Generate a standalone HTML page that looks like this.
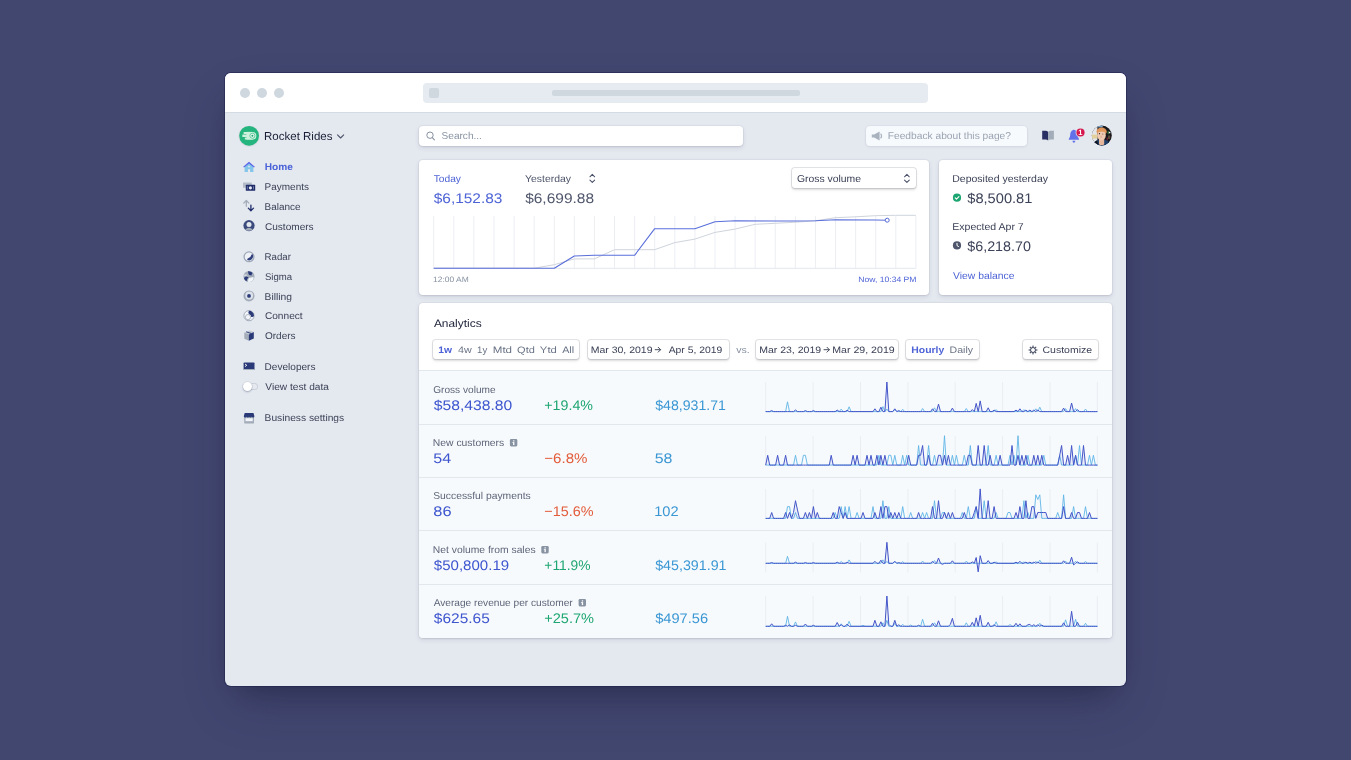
<!DOCTYPE html>
<html lang="en"><head><meta charset="utf-8"><title>Rocket Rides – Dashboard</title>
<style>
html,body{margin:0;padding:0}
body{width:1351px;height:760px;overflow:hidden;background:#424770;font-family:"Liberation Sans",sans-serif;position:relative;text-rendering:geometricPrecision}
#p{position:absolute;left:0;top:0;width:1351px;height:760px;overflow:hidden;will-change:transform}
#p div,#p .a{position:absolute;box-sizing:border-box}
.t{position:absolute;white-space:nowrap;line-height:20px;transform-origin:0 50%;display:block}
</style></head>
<body><div id="p">
<div style="left:225px;top:73px;width:901px;height:613px;border-radius:6px;background:#e4e8ef;box-shadow:0 0 0 1px rgba(28,30,72,.5),0 23px 46px -9px rgba(30,30,70,.32),0 14px 28px -14px rgba(0,0,0,.34);"></div>
<div style="left:225px;top:73px;width:901px;height:40px;border-radius:6px 6px 0 0;background:#fff;border-bottom:1px solid #d5dbe3;"></div>
<div style="left:240px;top:88px;width:10px;height:10px;border-radius:50%;background:#cfd7df;"></div>
<div style="left:256.7px;top:88px;width:10px;height:10px;border-radius:50%;background:#cfd7df;"></div>
<div style="left:273.5px;top:88px;width:10px;height:10px;border-radius:50%;background:#cfd7df;"></div>
<div style="left:423px;top:83px;width:505px;height:20px;border-radius:4px;background:#e6ebf1;"></div>
<div style="left:428.7px;top:88px;width:10px;height:10px;border-radius:2px;background:#cfd7df;"></div>
<div style="left:551.5px;top:90px;width:248.5px;height:6px;border-radius:2px;background:#cfd7df;"></div>
<svg class="a" style="left:236px;top:123px" width="27" height="27" viewBox="0 0 27 27"><circle cx="13.1" cy="13.3" r="10.6" fill="#3c4257" opacity=".07"/><circle cx="13.1" cy="12.8" r="9.9" fill="#24b47e"/>
<g fill="#cdf1dc"><rect x="7.6" y="8.9" width="9" height="2.2" rx=".5"/><rect x="6.3" y="11.6" width="9" height="2.3" rx=".5"/><rect x="8.8" y="14.4" width="8" height="2.2" rx=".5"/><rect x="10.5" y="8.9" width="6" height="7.7"/><circle cx="16.5" cy="12.75" r="3.85"/></g>
<circle cx="16.4" cy="12.75" r="2.5" fill="#eefbf3" stroke="#2fb984" stroke-width=".7"/><circle cx="16.4" cy="12.75" r="1" fill="#1fa56f"/></svg>
<span class="t" style="left:264px;top:127px;font-size:11.5px;color:#1a1f36;transform:translateX(0.05px);">Rocket Rides</span>
<svg class="a" style="left:336px;top:132px" width="11" height="10" viewBox="0 0 11 10"><path d="M1.5 2.8 L4.6 6 L7.7 2.8" fill="none" stroke="#4f566b" stroke-width="1.1" stroke-linecap="round" stroke-linejoin="round"/></svg>
<span class="t" style="left:264px;top:158px;font-size:9.8px;color:#4a62d8;font-weight:700;transform:translateX(0.72px) scaleX(1.0329);">Home</span>
<span class="t" style="left:264px;top:178px;font-size:9.8px;color:#3c4257;transform:translateX(0.58px) scaleX(1.0185);">Payments</span>
<span class="t" style="left:264px;top:198px;font-size:9.8px;color:#3c4257;transform:translateX(0.58px) scaleX(1.0182);">Balance</span>
<span class="t" style="left:264px;top:218px;font-size:9.8px;color:#3c4257;transform:translateX(0.89px) scaleX(1.0295);">Customers</span>
<span class="t" style="left:264px;top:248px;font-size:9.8px;color:#3c4257;transform:translateX(0.61px) scaleX(0.9873);">Radar</span>
<span class="t" style="left:264px;top:268px;font-size:9.8px;color:#3c4257;transform:translateX(0.97px) scaleX(0.9768);">Sigma</span>
<span class="t" style="left:264px;top:288px;font-size:9.8px;color:#3c4257;transform:translateX(0.55px) scaleX(1.0521);">Billing</span>
<span class="t" style="left:264px;top:307px;font-size:9.8px;color:#3c4257;transform:translateX(0.88px) scaleX(1.0353);">Connect</span>
<span class="t" style="left:264px;top:327px;font-size:9.8px;color:#3c4257;transform:translateX(0.93px) scaleX(1.0229);">Orders</span>
<span class="t" style="left:264px;top:358px;font-size:9.8px;color:#3c4257;transform:translateX(0.57px) scaleX(1.0266);">Developers</span>
<span class="t" style="left:265px;top:378px;font-size:9.8px;color:#3c4257;transform:translateX(0.36px) scaleX(1.0369);">View test data</span>
<span class="t" style="left:264px;top:409px;font-size:9.8px;color:#3c4257;transform:translateX(0.56px) scaleX(1.0439);">Business settings</span>
<svg class="a" style="left:242px;top:160px" width="15" height="15" viewBox="0 0 15 15"><g transform="translate(0.00 0.30)"><path d="M7 2.2 L11.4 6 V11.6 H8.1 V8.9 H5.9 V11.6 H2.6 V6 Z" fill="#84c5ea"/><circle cx="7" cy="6.3" r=".9" fill="#e3e8ee"/><path d="M7 1.5 L12.8 6.4 L12 7.3 L7 3.1 L2 7.3 L1.2 6.4 Z" fill="#5b62e6"/></g></svg>
<svg class="a" style="left:242px;top:179px" width="15" height="15" viewBox="0 0 15 15"><g transform="translate(0.00 0.80)"><rect x="1" y="2.6" width="8.8" height="5.4" rx=".6" fill="#b3bbc8"/><rect x="3.8" y="5" width="9.4" height="6" rx=".6" fill="#1f2d6b"/><circle cx="8.4" cy="8" r="1.6" fill="#e9edf3"/><path d="M5.3 6.4 V9.6 M11.5 6.4 V9.6" stroke="#8f9ac0" stroke-width=".7"/></g></svg>
<svg class="a" style="left:242px;top:198px" width="15" height="15" viewBox="0 0 15 15"><g transform="translate(0.00 0.50)"><path d="M4.3 7.8 V2.2 M1.7 4.6 L4.3 2 L6.9 4.6" fill="none" stroke="#a3acb9" stroke-width="1.25" stroke-linecap="round" stroke-linejoin="round"/><path d="M8.9 6.6 V12 M6.3 9.6 L8.9 12.2 L11.5 9.6" fill="none" stroke="#1f2d6b" stroke-width="1.3" stroke-linecap="round" stroke-linejoin="round"/></g></svg>
<svg class="a" style="left:242px;top:218px" width="15" height="15" viewBox="0 0 15 15"><g transform="translate(0.00 0.60)"><circle cx="7" cy="7" r="5.6" fill="#3a4a7c"/><circle cx="7" cy="6" r="2.5" fill="#e3e8ee"/><path d="M3.2 10.8 Q7 7.6 10.8 10.8 Q7 13.6 3.2 10.8Z" fill="#a3acb9"/></g></svg>
<svg class="a" style="left:242px;top:249px" width="15" height="15" viewBox="0 0 15 15"><g transform="translate(0.00 0.80)"><circle cx="7" cy="7" r="4.9" fill="#eef1f6" stroke="#9ea8b8" stroke-width="1.3"/><path d="M10.6 4.5 A4.1 4.1 0 0 1 5.4 10.2 Q4.8 9 6.2 8.5 Q8.6 8 9.2 5.4 Q9.7 3.9 10.6 4.5Z" fill="#2f3f7c"/></g></svg>
<svg class="a" style="left:242px;top:269px" width="15" height="15" viewBox="0 0 15 15"><g transform="translate(0.00 0.50)"><circle cx="7" cy="7" r="5.5" fill="#a3acb9"/><path d="M6 1.7 Q9 1.5 10.6 3.4 Q9.4 4.6 9.6 6 L7.2 5.6 Q6.2 4.4 6 1.7Z" fill="#2a3a78"/><path d="M2 9 Q2.4 7.2 4.4 7 L6.6 7.8 Q5 9.4 4.6 11.8 Q2.8 11 2 9Z" fill="#2a3a78"/><path d="M7 8.6 L11.4 7.6 Q12.4 10 9.6 11.8 Q7.6 12.8 6 12.2 Q6 10 7 8.6Z" fill="#f2f5f9"/><path d="M2.2 5.2 Q4 4.2 5.6 6 Q4 6.6 2 6.8Z" fill="#e3e8ee" opacity=".7"/></g></svg>
<svg class="a" style="left:242px;top:288px" width="15" height="15" viewBox="0 0 15 15"><g transform="translate(0.00 0.90)"><circle cx="7" cy="7" r="5.5" fill="#a3acb9"/><circle cx="7.2" cy="6.6" r="3.9" fill="#dde3ea"/><circle cx="7" cy="7" r="1.9" fill="#2a3a78"/></g></svg>
<svg class="a" style="left:242px;top:308px" width="15" height="15" viewBox="0 0 15 15"><g transform="translate(0.00 0.70)"><circle cx="7" cy="7" r="5.1" fill="#f2f5f9" stroke="#a3acb9" stroke-width="1"/><path d="M7 2 A5 5 0 0 1 12 7 Q11 9 9 8 Q9.2 6 7 5.6 Q5.6 3.6 7 2Z" fill="#2a3a78"/><circle cx="6" cy="8.4" r="2.6" fill="none" stroke="#a3acb9" stroke-width=".8"/></g></svg>
<svg class="a" style="left:242px;top:328px" width="15" height="15" viewBox="0 0 15 15"><g transform="translate(0.00 0.40)"><path d="M2.3 4.2 L7.2 2 L11.8 3.6 L6.8 6Z" fill="#c1c9d2"/><path d="M2.3 4.2 L6.8 6 V12.4 L2.3 10.4Z" fill="#a3acb9"/><path d="M6.8 6 L11.8 3.6 V10 L6.8 12.4Z" fill="#2a3a78"/><path d="M4.2 3.4 L9 5 V7" fill="none" stroke="#2a3a78" stroke-width=".9"/></g></svg>
<svg class="a" style="left:242px;top:359px" width="15" height="15" viewBox="0 0 15 15"><g transform="translate(0.00 0.20)"><rect x="1.6" y="3.2" width="10.9" height="7.6" rx=".8" fill="#2a3a78"/><rect x="1.6" y="9.8" width="10.9" height="1" fill="#a3acb9"/><path d="M3 4.8 L4.8 6.1 L3 7.4" fill="none" stroke="#fff" stroke-width=".9"/></g></svg>
<svg class="a" style="left:242px;top:410px" width="15" height="15" viewBox="0 0 15 15"><g transform="translate(0.00 0.60)"><rect x="2.2" y="5.6" width="9.8" height="7.4" rx=".9" fill="#a3acb9"/><rect x="3.5" y="7.6" width="7.2" height="3" fill="#f2f5f9"/><path d="M2.7 2.4 H11.5 L12.4 5.6 Q12.4 6.9 11.2 6.9 Q10.2 6.9 9.7 6.2 Q9.2 6.9 8.4 6.9 Q7.5 6.9 7.1 6.2 Q6.6 6.9 5.8 6.9 Q4.9 6.9 4.5 6.2 Q4 6.9 3 6.9 Q1.8 6.9 1.8 5.6Z" fill="#2a3a78"/></g></svg>
<div style="left:243px;top:383px;width:15px;height:7px;border-radius:4px;background:#e6eaf0;box-shadow:inset 0 0 0 1px #cbd2dc;"></div>
<div style="left:242.6px;top:382px;width:9px;height:9px;border-radius:50%;background:#fff;box-shadow:0 1px 2px rgba(40,50,90,.32),0 0 0 .5px rgba(40,50,90,.10);"></div>
<div style="left:419.3px;top:126px;width:324px;height:20px;border-radius:4px;background:#fff;box-shadow:0 0 0 1px rgba(50,50,93,.04),0 2px 5px rgba(50,50,93,.10),0 1px 2px rgba(0,0,0,.07);"></div>
<svg class="a" style="left:424px;top:129px" width="15" height="15" viewBox="0 0 15 15"><circle cx="6" cy="6.2" r="3.2" fill="none" stroke="#8792a2" stroke-width="1"/><path d="M8.4 8.7 L10.4 10.8" stroke="#8792a2" stroke-width="1.1" stroke-linecap="round"/></svg>
<span class="t" style="left:441px;top:127px;font-size:10px;color:#8792a2;transform:translateX(0.54px) scaleX(1.0090);">Search...</span>
<div style="left:865.8px;top:126px;width:161.5px;height:19.8px;border-radius:4px;background:#f7fafc;box-shadow:0 0 0 1px rgba(50,50,93,.03),0 1px 3px rgba(50,50,93,.08);"></div>
<svg class="a" style="left:870px;top:129px" width="15" height="15" viewBox="0 0 15 15"><path d="M1.8 5.4 H4.2 L9.6 2.6 V11.4 L4.2 8.6 H1.8Z" fill="#a9b2bf"/><path d="M10.6 4.6 Q12.6 7 10.6 9.4" fill="none" stroke="#a9b2bf" stroke-width="1.1"/></svg>
<span class="t" style="left:887px;top:127px;font-size:10px;color:#9aa3b2;transform:translateX(0.76px) scaleX(1.0213);">Feedback about this page?</span>
<svg class="a" style="left:1040px;top:128px" width="17" height="15" viewBox="0 0 17 15"><path d="M2.2 2.8 H5.4 Q7.4 2.8 8.1 4 V12.4 Q7.4 11.6 5.4 11.6 H2.2Z" fill="#2a2f63"/><path d="M13.9 2.8 H10.8 Q8.8 2.8 8.1 4 V12.4 Q8.8 11.6 10.8 11.6 H13.9Z" fill="#a3acb9"/></svg>
<svg class="a" style="left:1066px;top:127px" width="21" height="19" viewBox="0 0 21 19"><path d="M7.3 3.1 Q7.9 1.9 8.5 3.1 Q11.5 3.9 11.6 8 Q11.7 10.6 13 11.9 Q13.3 12.8 12.4 12.8 H3.4 Q2.5 12.8 2.8 11.9 Q4.1 10.6 4.2 8 Q4.3 3.9 7.3 3.1Z" fill="#6271ea"/><path d="M6.4 13.7 H9.4 Q9.1 15.7 7.9 15.7 Q6.7 15.7 6.4 13.7Z" fill="#6271ea"/><circle cx="14.5" cy="5.5" r="4.9" fill="#e4e8ef"/><circle cx="14.5" cy="5.5" r="4.1" fill="#d6184e"/></svg>
<span class="t" style="left:1078px;top:123px;font-size:7.5px;color:#fff;font-weight:700;transform:translateX(0.13px);">1</span>
<svg class="a" style="left:1091px;top:125px" width="23" height="23" viewBox="0 0 23 23"><defs><clipPath id="av"><circle cx="10.8" cy="10.5" r="10"/></clipPath></defs>
<circle cx="10.8" cy="10.6" r="10.5" fill="#f4f6f9" opacity=".8"/>
<g clip-path="url(#av)"><rect width="22" height="22" fill="#17171c"/><rect width="6.4" height="22" fill="#e3e5e8"/><rect x="1" y="9.6" width="5.4" height="4" fill="#e3cf9c"/><rect x="6.4" y="0" width="5.4" height="2.4" fill="#7aa3c8"/>
<rect x="16.6" y="6.2" width="1.2" height="3" fill="#2f7a3a"/><rect x="17.8" y="6.8" width="1.6" height="1.5" fill="#e8ece8"/><rect x="17" y="10.5" width="2.2" height="3.4" fill="#5a4a3a"/><rect x="15.6" y="12.4" width="1.4" height="3" fill="#6a2030"/>
<path d="M2 22 Q2.2 15.6 7.6 14.8 L13.6 14.8 Q18.6 15.4 19.4 22Z" fill="#1d3f6a"/><path d="M2 22 Q2.4 17 6 15.6 L7.4 19.6 L5 22Z" fill="#10141f"/>
<rect x="8" y="13" width="5.2" height="7" rx="1.6" fill="#e6b69b"/>
<ellipse cx="10.6" cy="6.4" rx="5.1" ry="3.9" fill="#df9458"/>
<ellipse cx="10.5" cy="10.6" rx="4.3" ry="4.8" fill="#f0c9b2"/>
<path d="M6 7.6 Q7.4 3.6 11 4 Q15 4.2 15.4 8 Q13.4 6.2 10.4 6.8 Q7.6 6.6 6 7.6Z" fill="#e29a5e"/>
<circle cx="8.5" cy="8.7" r=".65" fill="#2a1f20"/><circle cx="11.8" cy="9" r=".6" fill="#6a5548"/><rect x="9.6" y="10.6" width="1.1" height="2.4" fill="#d9a58c" opacity=".8"/></g></svg>
<div style="left:419px;top:160px;width:510px;height:135px;border-radius:4px;background:#fff;box-shadow:0 0 0 1px rgba(50,50,93,.04),0 2px 5px rgba(50,50,93,.10),0 1px 2px rgba(0,0,0,.07);"></div>
<span class="t" style="left:433px;top:170px;font-size:10px;color:#4d63d6;transform:translateX(0.67px) scaleX(1.0211);">Today</span>
<span class="t" style="left:433px;top:188px;font-size:14px;color:#4d63d6;transform:translateX(0.73px) scaleX(1.1021);">$6,152.83</span>
<span class="t" style="left:525px;top:170px;font-size:10px;color:#4f566b;transform:translateX(0.07px) scaleX(1.0418);">Yesterday</span>
<span class="t" style="left:525px;top:188px;font-size:14px;color:#4f566b;transform:translateX(0.13px) scaleX(1.1069);">$6,699.88</span>
<svg class="a" style="left:588px;top:172px" width="9" height="12" viewBox="0 0 9 12"><svg x="0.30" y="0.90" width="8" height="11" viewBox="0 0 7.2 10.2"><path d="M1.4 3.6 L3.6 1.4 L5.8 3.6 M1.4 6.6 L3.6 8.8 L5.8 6.6" fill="none" stroke="#4a5168" stroke-width=".95" stroke-linecap="round" stroke-linejoin="round"/></svg></svg>
<div style="left:792px;top:168px;width:124px;height:20px;border-radius:3px;background:#fff;box-shadow:0 0 0 1px rgba(60,66,87,.14),0 1.5px 2px rgba(0,0,0,.10),0 2px 4px rgba(60,66,87,.06);"></div>
<span class="t" style="left:796px;top:170px;font-size:10px;color:#3c4257;transform:translateX(0.88px) scaleX(1.0389);">Gross volume</span>
<svg class="a" style="left:902px;top:172px" width="9" height="12" viewBox="0 0 9 12"><svg x="0.90" y="0.90" width="8" height="11" viewBox="0 0 7.2 10.2"><path d="M1.4 3.6 L3.6 1.4 L5.8 3.6 M1.4 6.6 L3.6 8.8 L5.8 6.6" fill="none" stroke="#4a5168" stroke-width=".95" stroke-linecap="round" stroke-linejoin="round"/></svg></svg>
<svg class="a" style="left:0;top:0" width="1351" height="760"><path d="M433.70 216 V268.4" stroke="#eceef3" stroke-width="1"/><path d="M453.79 216 V268.4" stroke="#eceef3" stroke-width="1"/><path d="M473.88 216 V268.4" stroke="#eceef3" stroke-width="1"/><path d="M493.98 216 V268.4" stroke="#eceef3" stroke-width="1"/><path d="M514.07 216 V268.4" stroke="#eceef3" stroke-width="1"/><path d="M534.16 216 V268.4" stroke="#eceef3" stroke-width="1"/><path d="M554.25 216 V268.4" stroke="#eceef3" stroke-width="1"/><path d="M574.34 216 V268.4" stroke="#eceef3" stroke-width="1"/><path d="M594.44 216 V268.4" stroke="#eceef3" stroke-width="1"/><path d="M614.53 216 V268.4" stroke="#eceef3" stroke-width="1"/><path d="M634.62 216 V268.4" stroke="#eceef3" stroke-width="1"/><path d="M654.71 216 V268.4" stroke="#eceef3" stroke-width="1"/><path d="M674.80 216 V268.4" stroke="#eceef3" stroke-width="1"/><path d="M694.90 216 V268.4" stroke="#eceef3" stroke-width="1"/><path d="M714.99 216 V268.4" stroke="#eceef3" stroke-width="1"/><path d="M735.08 216 V268.4" stroke="#eceef3" stroke-width="1"/><path d="M755.17 216 V268.4" stroke="#eceef3" stroke-width="1"/><path d="M775.26 216 V268.4" stroke="#eceef3" stroke-width="1"/><path d="M795.36 216 V268.4" stroke="#eceef3" stroke-width="1"/><path d="M815.45 216 V268.4" stroke="#eceef3" stroke-width="1"/><path d="M835.54 216 V268.4" stroke="#eceef3" stroke-width="1"/><path d="M855.63 216 V268.4" stroke="#eceef3" stroke-width="1"/><path d="M875.72 216 V268.4" stroke="#eceef3" stroke-width="1"/><path d="M895.82 216 V268.4" stroke="#eceef3" stroke-width="1"/><path d="M915.91 216 V268.4" stroke="#eceef3" stroke-width="1"/><path d="M433.7 268.3 H915.9" stroke="#e3e8ee" stroke-width="1"/><polyline fill="none" stroke="#cfd4dc" stroke-width="1" points="433.7,268.2 534.2,268.2 554.3,264.7 574.3,258.9 594.4,258.9 614.5,249.7 634.6,249.7 654.7,249.7 674.8,242.6 694.9,239.1 715.0,232.4 735.1,229.1 755.2,224.3 775.3,223.3 795.4,222.2 815.4,220.8 835.5,217.7 855.6,216.8 875.7,215.7 895.8,215.3 915.9,215.3"/><polyline fill="none" stroke="#5a6fdb" stroke-width="1.1" stroke-linejoin="round" points="433.7,268.2 554.3,268.2 574.3,256 594.4,255.3 634.6,255.3 654.7,228.7 694.9,228.7 715.0,221.8 735.1,220.8 775.3,221 795.4,221 815.4,220.8 835.5,219.8 875.7,220 887.2,220.2"/><circle cx="887.2" cy="220.2" r="2" fill="#fff" stroke="#5469d4" stroke-width="1"/></svg>
<span class="t" style="left:433px;top:270px;font-size:7.8px;color:#8792a2;transform:translateX(0.06px) scaleX(1.0812);">12:00 AM</span>
<span class="t" style="left:858px;top:270px;font-size:7.8px;color:#4d63d6;transform:translateX(0.30px) scaleX(1.1004);">Now, 10:34 PM</span>
<div style="left:939px;top:160px;width:173px;height:135px;border-radius:4px;background:#fff;box-shadow:0 0 0 1px rgba(50,50,93,.04),0 2px 5px rgba(50,50,93,.10),0 1px 2px rgba(0,0,0,.07);"></div>
<span class="t" style="left:952px;top:170px;font-size:10px;color:#3c4257;transform:translateX(0.24px) scaleX(1.0507);">Deposited yesterday</span>
<svg class="a" style="left:952px;top:193px" width="10" height="10" viewBox="0 0 10 10"><g transform="translate(0.50 0.20)"><circle cx="4.5" cy="4.5" r="4.1" fill="#1ea672"/><path d="M2.7 4.6 L4 5.9 L6.4 3.4" fill="none" stroke="#fff" stroke-width="1.1" stroke-linecap="round" stroke-linejoin="round"/></g></svg>
<span class="t" style="left:967px;top:188px;font-size:14px;color:#3c4257;transform:translateX(0.24px) scaleX(1.0464);">$8,500.81</span>
<span class="t" style="left:952px;top:218px;font-size:10px;color:#3c4257;transform:translateX(0.24px) scaleX(1.0541);">Expected Apr 7</span>
<svg class="a" style="left:952px;top:240px" width="10" height="10" viewBox="0 0 10 10"><g transform="translate(0.50 0.90)"><circle cx="4.5" cy="4.5" r="4.1" fill="#4f566b"/><path d="M4.5 2.4 V4.7 L6 5.6" fill="none" stroke="#fff" stroke-width="1" stroke-linecap="round" stroke-linejoin="round"/></g></svg>
<span class="t" style="left:967px;top:236px;font-size:14px;color:#3c4257;transform:translateX(0.25px) scaleX(1.0229);">$6,218.70</span>
<span class="t" style="left:953px;top:267px;font-size:10px;color:#4d63d6;transform:translateX(0.05px) scaleX(1.0354);">View balance</span>
<div style="left:419.3px;top:303.3px;width:692.7px;height:334.5px;border-radius:4px;background:#fff;box-shadow:0 0 0 1px rgba(50,50,93,.04),0 2px 5px rgba(50,50,93,.10),0 1px 2px rgba(0,0,0,.07);overflow:hidden;"><div style="position:absolute;left:0;right:0;top:66.7px;bottom:0;background:#f7fafc;border-top:1px solid #e3e8ee"></div></div>
<span class="t" style="left:433px;top:314px;font-size:10.9px;color:#1a1f36;transform:translateX(0.88px) scaleX(1.0949);">Analytics</span>
<div style="left:433px;top:340px;width:146px;height:19px;border-radius:3px;background:#fff;box-shadow:0 0 0 1px rgba(60,66,87,.14),0 1.5px 2px rgba(0,0,0,.10),0 2px 4px rgba(60,66,87,.06);"></div>
<span class="t" style="left:438px;top:340px;font-size:9.3px;color:#4d63d6;font-weight:700;transform:translateX(0.35px) scaleX(1.1065);">1w</span>
<span class="t" style="left:457px;top:340px;font-size:9.3px;color:#697386;transform:translateX(0.95px) scaleX(1.1540);">4w</span>
<span class="t" style="left:477px;top:340px;font-size:9.3px;color:#697386;transform:translateX(0.07px) scaleX(1.0334);">1y</span>
<span class="t" style="left:492px;top:340px;font-size:9.3px;color:#697386;transform:translateX(0.75px) scaleX(1.2446);">Mtd</span>
<span class="t" style="left:517px;top:340px;font-size:9.3px;color:#697386;transform:translateX(0.08px) scaleX(1.1827);">Qtd</span>
<span class="t" style="left:539px;top:340px;font-size:9.3px;color:#697386;transform:translateX(0.85px) scaleX(1.2162);">Ytd</span>
<span class="t" style="left:562px;top:340px;font-size:9.3px;color:#697386;transform:translateX(0.18px) scaleX(1.1552);">All</span>
<div style="left:588px;top:340px;width:141px;height:19px;border-radius:3px;background:#fff;box-shadow:0 0 0 1px rgba(60,66,87,.14),0 1.5px 2px rgba(0,0,0,.10),0 2px 4px rgba(60,66,87,.06);"></div>
<span class="t" style="left:590px;top:340px;font-size:9.3px;color:#3c4257;transform:translateX(0.64px) scaleX(1.1287);">Mar 30, 2019</span>
<svg class="a" style="left:654px;top:346px" width="9" height="9" viewBox="0 0 9 9"><g transform="translate(0.40 0.10)"><path d="M.8 3.6 H6 M3.8 1.2 L6.2 3.6 L3.8 6" fill="none" stroke="#3c4257" stroke-width=".95" stroke-linecap="round" stroke-linejoin="round"/></g></svg>
<span class="t" style="left:668px;top:340px;font-size:9.3px;color:#3c4257;transform:translateX(0.68px) scaleX(1.1128);">Apr 5, 2019</span>
<span class="t" style="left:736px;top:340px;font-size:9.3px;color:#8792a2;transform:translateX(0.26px) scaleX(1.1360);">vs.</span>
<div style="left:756px;top:340px;width:142px;height:19px;border-radius:3px;background:#fff;box-shadow:0 0 0 1px rgba(60,66,87,.14),0 1.5px 2px rgba(0,0,0,.10),0 2px 4px rgba(60,66,87,.06);"></div>
<span class="t" style="left:759px;top:340px;font-size:9.3px;color:#3c4257;transform:translateX(0.14px) scaleX(1.1306);">Mar 23, 2019</span>
<svg class="a" style="left:823px;top:346px" width="9" height="9" viewBox="0 0 9 9"><g transform="translate(0.20 0.10)"><path d="M.8 3.6 H6 M3.8 1.2 L6.2 3.6 L3.8 6" fill="none" stroke="#3c4257" stroke-width=".95" stroke-linecap="round" stroke-linejoin="round"/></g></svg>
<span class="t" style="left:832px;top:340px;font-size:9.3px;color:#3c4257;transform:translateX(0.23px) scaleX(1.1399);">Mar 29, 2019</span>
<div style="left:906px;top:340px;width:73px;height:19px;border-radius:3px;background:#fff;box-shadow:0 0 0 1px rgba(60,66,87,.14),0 1.5px 2px rgba(0,0,0,.10),0 2px 4px rgba(60,66,87,.06);"></div>
<span class="t" style="left:911px;top:340px;font-size:9.3px;color:#4d63d6;font-weight:700;transform:translateX(0.30px) scaleX(1.1188);">Hourly</span>
<span class="t" style="left:949px;top:340px;font-size:9.3px;color:#697386;transform:translateX(0.53px) scaleX(1.1362);">Daily</span>
<div style="left:1023px;top:340px;width:75px;height:19px;border-radius:3px;background:#fff;box-shadow:0 0 0 1px rgba(60,66,87,.14),0 1.5px 2px rgba(0,0,0,.10),0 2px 4px rgba(60,66,87,.06);"></div>
<svg class="a" style="left:1028px;top:345px" width="11" height="11" viewBox="0 0 11 11"><g transform="translate(5 5)"><circle r="2.45" fill="none" stroke="#4a5168" stroke-width="1.05"/><rect x="-.6" y="-4.4" width="1.2" height="1.7" fill="#4a5168" transform="rotate(0)"/><rect x="-.6" y="-4.4" width="1.2" height="1.7" fill="#4a5168" transform="rotate(45)"/><rect x="-.6" y="-4.4" width="1.2" height="1.7" fill="#4a5168" transform="rotate(90)"/><rect x="-.6" y="-4.4" width="1.2" height="1.7" fill="#4a5168" transform="rotate(135)"/><rect x="-.6" y="-4.4" width="1.2" height="1.7" fill="#4a5168" transform="rotate(180)"/><rect x="-.6" y="-4.4" width="1.2" height="1.7" fill="#4a5168" transform="rotate(225)"/><rect x="-.6" y="-4.4" width="1.2" height="1.7" fill="#4a5168" transform="rotate(270)"/><rect x="-.6" y="-4.4" width="1.2" height="1.7" fill="#4a5168" transform="rotate(315)"/></g></svg>
<span class="t" style="left:1042px;top:340px;font-size:9.3px;color:#3c4257;transform:translateX(0.47px) scaleX(1.1314);">Customize</span>
<div style="left:419.3px;top:424px;width:692.7px;height:1px;background:#e3e8ee;"></div>
<div style="left:419.3px;top:477px;width:692.7px;height:1px;background:#e3e8ee;"></div>
<div style="left:419.3px;top:530px;width:692.7px;height:1px;background:#e3e8ee;"></div>
<div style="left:419.3px;top:584px;width:692.7px;height:1px;background:#e3e8ee;"></div>
<span class="t" style="left:433px;top:381px;font-size:10px;color:#5d6579;transform:translateX(0.19px) scaleX(1.0109);">Gross volume</span>
<span class="t" style="left:433px;top:395px;font-size:14px;color:#3d55cf;transform:translateX(0.83px) scaleX(1.1200);">$58,438.80</span>
<span class="t" style="left:544px;top:395px;font-size:14px;color:#1ea672;transform:translateX(0.30px) scaleX(1.0173);">+19.4%</span>
<span class="t" style="left:655px;top:395px;font-size:14px;color:#3a97d4;transform:translateX(0.15px) scaleX(1.0110);">$48,931.71</span>
<span class="t" style="left:432px;top:434px;font-size:10px;color:#5d6579;transform:translateX(0.85px) scaleX(1.0351);">New customers</span>
<svg class="a" style="left:509px;top:438px" width="9" height="9" viewBox="0 0 9 9"><g transform="translate(0.60 0.70)"><rect x=".3" y=".3" width="7.4" height="7.4" rx="1.3" fill="#8792a2"/><rect x="3.5" y="3.4" width="1.3" height="3" fill="#fff"/><rect x="3.5" y="1.6" width="1.3" height="1.2" fill="#fff"/><rect x="2.8" y="3.4" width="1" height=".8" fill="#fff"/></g></svg>
<span class="t" style="left:433px;top:448px;font-size:14px;color:#3d55cf;transform:translateX(0.36px) scaleX(1.1505);">54</span>
<span class="t" style="left:544px;top:448px;font-size:14px;color:#e25c3b;transform:translateX(0.26px) scaleX(1.0772);">−6.8%</span>
<span class="t" style="left:654px;top:448px;font-size:14px;color:#3a97d4;transform:translateX(0.66px) scaleX(1.1386);">58</span>
<span class="t" style="left:433px;top:487px;font-size:10px;color:#5d6579;transform:translateX(0.23px) scaleX(1.0312);">Successful payments</span>
<span class="t" style="left:433px;top:501px;font-size:14px;color:#3d55cf;transform:translateX(0.29px) scaleX(1.1708);">86</span>
<span class="t" style="left:544px;top:501px;font-size:14px;color:#e25c3b;transform:translateX(0.29px) scaleX(1.0282);">−15.6%</span>
<span class="t" style="left:654px;top:501px;font-size:14px;color:#3a97d4;transform:translateX(0.18px) scaleX(1.0468);">102</span>
<span class="t" style="left:432px;top:541px;font-size:10px;color:#5d6579;transform:translateX(0.85px) scaleX(1.0326);">Net volume from sales</span>
<svg class="a" style="left:541px;top:545px" width="9" height="9" viewBox="0 0 9 9"><g transform="translate(0.00 0.70)"><rect x=".3" y=".3" width="7.4" height="7.4" rx="1.3" fill="#8792a2"/><rect x="3.5" y="3.4" width="1.3" height="3" fill="#fff"/><rect x="3.5" y="1.6" width="1.3" height="1.2" fill="#fff"/><rect x="2.8" y="3.4" width="1" height=".8" fill="#fff"/></g></svg>
<span class="t" style="left:433px;top:555px;font-size:14px;color:#3d55cf;transform:translateX(0.84px) scaleX(1.0743);">$50,800.19</span>
<span class="t" style="left:544px;top:555px;font-size:14px;color:#1ea672;transform:translateX(0.33px) scaleX(0.9857);">+11.9%</span>
<span class="t" style="left:655px;top:555px;font-size:14px;color:#3a97d4;transform:translateX(0.15px) scaleX(1.0182);">$45,391.91</span>
<span class="t" style="left:433px;top:594px;font-size:10px;color:#5d6579;transform:translateX(0.68px) scaleX(1.0136);">Average revenue per customer</span>
<svg class="a" style="left:578px;top:598px" width="9" height="9" viewBox="0 0 9 9"><g transform="translate(0.30 0.70)"><rect x=".3" y=".3" width="7.4" height="7.4" rx="1.3" fill="#8792a2"/><rect x="3.5" y="3.4" width="1.3" height="3" fill="#fff"/><rect x="3.5" y="1.6" width="1.3" height="1.2" fill="#fff"/><rect x="2.8" y="3.4" width="1" height=".8" fill="#fff"/></g></svg>
<span class="t" style="left:433px;top:608px;font-size:14px;color:#3d55cf;transform:translateX(0.83px) scaleX(1.1069);">$625.65</span>
<span class="t" style="left:544px;top:608px;font-size:14px;color:#1ea672;transform:translateX(0.29px) scaleX(1.0387);">+25.7%</span>
<span class="t" style="left:655px;top:608px;font-size:14px;color:#3a97d4;transform:translateX(0.14px) scaleX(1.0473);">$497.56</span>
<svg class="a" style="left:0;top:0" width="1351" height="760"><path d="M765.7 382 V412" stroke="#eaedf2" stroke-width="1"/><path d="M813.1 382 V412" stroke="#eaedf2" stroke-width="1"/><path d="M860.5 382 V412" stroke="#eaedf2" stroke-width="1"/><path d="M907.9 382 V412" stroke="#eaedf2" stroke-width="1"/><path d="M955.2 382 V412" stroke="#eaedf2" stroke-width="1"/><path d="M1002.6 382 V412" stroke="#eaedf2" stroke-width="1"/><path d="M1050.0 382 V412" stroke="#eaedf2" stroke-width="1"/><path d="M1097.4 382 V412" stroke="#eaedf2" stroke-width="1"/><polyline fill="none" stroke="#5fb4e6" stroke-width="0.9" stroke-linejoin="round" opacity="1" points="765.7,411.6 767.7,411.6 769.7,411.6 771.7,411.6 773.6,411.6 775.6,411.6 777.6,411.6 779.6,411.6 781.6,411.6 783.6,411.6 785.6,411.6 787.5,401.8 789.5,411.6 791.5,411.6 793.5,411.6 795.5,411.6 797.5,411.6 799.5,411.6 801.5,411.6 803.4,411.6 805.4,411.6 807.4,411.6 809.4,411.6 811.4,411.6 813.4,411.6 815.4,411.6 817.3,411.6 819.3,411.6 821.3,411.6 823.3,411.6 825.3,411.6 827.3,411.6 829.3,411.6 831.2,411.6 833.2,411.6 835.2,411.6 837.2,411.6 839.2,411.6 841.2,409.1 843.2,411.6 845.1,411.6 847.1,411.6 849.1,406.8 851.1,411.6 853.1,411.6 855.1,411.6 857.1,411.6 859.1,411.6 861.0,411.6 863.0,411.6 865.0,411.6 867.0,411.6 869.0,411.6 871.0,411.6 873.0,411.6 874.9,411.6 876.9,411.6 878.9,411.6 880.9,411.6 882.9,406.6 884.9,411.6 886.9,409.1 888.8,411.6 890.8,411.6 892.8,411.6 894.8,409.6 896.8,411.6 898.8,411.6 900.8,411.6 902.7,409.3 904.7,411.6 906.7,411.6 908.7,411.6 910.7,411.6 912.7,411.6 914.7,411.6 916.7,411.6 918.6,411.6 920.6,411.6 922.6,408.5 924.6,411.6 926.6,411.6 928.6,411.6 930.6,411.6 932.5,411.6 934.5,407.8 936.5,411.6 938.5,411.6 940.5,411.6 942.5,411.6 944.5,411.6 946.4,411.6 948.4,411.6 950.4,411.6 952.4,411.6 954.4,411.6 956.4,411.6 958.4,411.6 960.4,411.6 962.3,411.6 964.3,411.6 966.3,408.5 968.3,411.6 970.3,411.6 972.3,411.6 974.3,411.6 976.2,411.6 978.2,411.6 980.2,411.6 982.2,411.6 984.2,411.6 986.2,411.6 988.2,411.6 990.1,411.6 992.1,411.6 994.1,411.6 996.1,409.6 998.1,411.6 1000.1,411.6 1002.1,411.6 1004.0,411.6 1006.0,411.6 1008.0,411.6 1010.0,411.6 1012.0,411.6 1014.0,411.6 1016.0,411.6 1018.0,411.6 1019.9,411.6 1021.9,411.6 1023.9,409.6 1025.9,411.6 1027.9,411.6 1029.9,411.6 1031.9,411.6 1033.8,411.6 1035.8,408.8 1037.8,411.6 1039.8,407.2 1041.8,411.6 1043.8,411.6 1045.8,411.6 1047.7,411.6 1049.7,411.6 1051.7,411.6 1053.7,411.6 1055.7,411.6 1057.7,411.6 1059.7,411.6 1061.6,411.6 1063.6,411.6 1065.6,408.6 1067.6,411.6 1069.6,411.6 1071.6,411.6 1073.6,411.6 1075.6,408.6 1077.5,411.6 1079.5,411.6 1081.5,411.6 1083.5,411.6 1085.5,409.1 1087.5,411.6 1089.5,411.6 1091.4,411.6 1093.4,411.6 1095.4,411.6 1097.4,411.6"/><polygon fill="#4355c9" opacity=".07" points="765.7,411.6 765.7,411.6 767.7,411.6 769.7,411.6 771.7,410.6 773.6,411.6 775.6,411.6 777.6,411.6 779.6,411.6 781.6,411.6 783.6,411.6 785.6,411.6 787.5,411.6 789.5,411.6 791.5,411.6 793.5,411.6 795.5,410.0 797.5,411.6 799.5,411.6 801.5,411.6 803.4,411.6 805.4,410.6 807.4,411.6 809.4,411.6 811.4,411.6 813.4,410.6 815.4,411.6 817.3,411.6 819.3,411.6 821.3,411.6 823.3,411.6 825.3,411.6 827.3,411.6 829.3,411.6 831.2,411.6 833.2,411.6 835.2,411.6 837.2,410.1 839.2,411.6 841.2,411.6 843.2,411.6 845.1,411.6 847.1,410.3 849.1,411.6 851.1,411.6 853.1,411.6 855.1,411.6 857.1,411.6 859.1,411.6 861.0,411.6 863.0,411.6 865.0,411.6 867.0,411.6 869.0,411.6 871.0,411.6 873.0,411.6 874.9,408.8 876.9,411.6 878.9,411.6 880.9,407.2 882.9,411.6 884.9,411.6 886.9,382.0 888.8,411.6 890.8,411.6 892.8,411.6 894.8,408.8 896.8,411.6 898.8,410.6 900.8,411.6 902.7,411.6 904.7,411.6 906.7,411.6 908.7,411.6 910.7,411.6 912.7,411.6 914.7,411.6 916.7,411.6 918.6,411.6 920.6,411.6 922.6,411.6 924.6,411.6 926.6,411.6 928.6,411.6 930.6,411.6 932.5,408.8 934.5,411.6 936.5,411.6 938.5,404.1 940.5,411.6 942.5,411.6 944.5,411.6 946.4,411.6 948.4,411.6 950.4,411.6 952.4,408.1 954.4,411.6 956.4,411.6 958.4,411.6 960.4,411.6 962.3,411.6 964.3,411.6 966.3,411.6 968.3,411.6 970.3,411.6 972.3,409.6 974.3,411.6 976.2,403.4 978.2,411.6 980.2,400.9 982.2,411.6 984.2,411.6 986.2,411.6 988.2,407.8 990.1,411.6 992.1,411.6 994.1,410.1 996.1,411.6 998.1,411.6 1000.1,411.6 1002.1,411.6 1004.0,411.6 1006.0,411.6 1008.0,411.6 1010.0,411.6 1012.0,411.6 1014.0,411.6 1016.0,410.1 1018.0,411.6 1019.9,408.8 1021.9,411.6 1023.9,411.6 1025.9,410.1 1027.9,411.6 1029.9,410.1 1031.9,411.6 1033.8,410.1 1035.8,411.6 1037.8,410.1 1039.8,411.6 1041.8,411.6 1043.8,411.6 1045.8,411.6 1047.7,411.6 1049.7,411.6 1051.7,411.6 1053.7,411.6 1055.7,411.6 1057.7,411.6 1059.7,411.6 1061.6,411.6 1063.6,408.1 1065.6,411.6 1067.6,411.6 1069.6,411.6 1071.6,403.0 1073.6,411.6 1075.6,411.6 1077.5,409.6 1079.5,411.6 1081.5,411.6 1083.5,411.6 1085.5,411.6 1087.5,411.6 1089.5,411.6 1091.4,411.6 1093.4,411.6 1095.4,411.6 1097.4,411.6 1097.4,411.6"/><polyline fill="none" stroke="#4355c9" stroke-width="1" stroke-linejoin="round" opacity="1" points="765.7,411.6 767.7,411.6 769.7,411.6 771.7,410.6 773.6,411.6 775.6,411.6 777.6,411.6 779.6,411.6 781.6,411.6 783.6,411.6 785.6,411.6 787.5,411.6 789.5,411.6 791.5,411.6 793.5,411.6 795.5,410.0 797.5,411.6 799.5,411.6 801.5,411.6 803.4,411.6 805.4,410.6 807.4,411.6 809.4,411.6 811.4,411.6 813.4,410.6 815.4,411.6 817.3,411.6 819.3,411.6 821.3,411.6 823.3,411.6 825.3,411.6 827.3,411.6 829.3,411.6 831.2,411.6 833.2,411.6 835.2,411.6 837.2,410.1 839.2,411.6 841.2,411.6 843.2,411.6 845.1,411.6 847.1,410.3 849.1,411.6 851.1,411.6 853.1,411.6 855.1,411.6 857.1,411.6 859.1,411.6 861.0,411.6 863.0,411.6 865.0,411.6 867.0,411.6 869.0,411.6 871.0,411.6 873.0,411.6 874.9,408.8 876.9,411.6 878.9,411.6 880.9,407.2 882.9,411.6 884.9,411.6 886.9,382.0 888.8,411.6 890.8,411.6 892.8,411.6 894.8,408.8 896.8,411.6 898.8,410.6 900.8,411.6 902.7,411.6 904.7,411.6 906.7,411.6 908.7,411.6 910.7,411.6 912.7,411.6 914.7,411.6 916.7,411.6 918.6,411.6 920.6,411.6 922.6,411.6 924.6,411.6 926.6,411.6 928.6,411.6 930.6,411.6 932.5,408.8 934.5,411.6 936.5,411.6 938.5,404.1 940.5,411.6 942.5,411.6 944.5,411.6 946.4,411.6 948.4,411.6 950.4,411.6 952.4,408.1 954.4,411.6 956.4,411.6 958.4,411.6 960.4,411.6 962.3,411.6 964.3,411.6 966.3,411.6 968.3,411.6 970.3,411.6 972.3,409.6 974.3,411.6 976.2,403.4 978.2,411.6 980.2,400.9 982.2,411.6 984.2,411.6 986.2,411.6 988.2,407.8 990.1,411.6 992.1,411.6 994.1,410.1 996.1,411.6 998.1,411.6 1000.1,411.6 1002.1,411.6 1004.0,411.6 1006.0,411.6 1008.0,411.6 1010.0,411.6 1012.0,411.6 1014.0,411.6 1016.0,410.1 1018.0,411.6 1019.9,408.8 1021.9,411.6 1023.9,411.6 1025.9,410.1 1027.9,411.6 1029.9,410.1 1031.9,411.6 1033.8,410.1 1035.8,411.6 1037.8,410.1 1039.8,411.6 1041.8,411.6 1043.8,411.6 1045.8,411.6 1047.7,411.6 1049.7,411.6 1051.7,411.6 1053.7,411.6 1055.7,411.6 1057.7,411.6 1059.7,411.6 1061.6,411.6 1063.6,408.1 1065.6,411.6 1067.6,411.6 1069.6,411.6 1071.6,403.0 1073.6,411.6 1075.6,411.6 1077.5,409.6 1079.5,411.6 1081.5,411.6 1083.5,411.6 1085.5,411.6 1087.5,411.6 1089.5,411.6 1091.4,411.6 1093.4,411.6 1095.4,411.6 1097.4,411.6"/><path d="M765.7 436 V466" stroke="#eaedf2" stroke-width="1"/><path d="M813.1 436 V466" stroke="#eaedf2" stroke-width="1"/><path d="M860.5 436 V466" stroke="#eaedf2" stroke-width="1"/><path d="M907.9 436 V466" stroke="#eaedf2" stroke-width="1"/><path d="M955.2 436 V466" stroke="#eaedf2" stroke-width="1"/><path d="M1002.6 436 V466" stroke="#eaedf2" stroke-width="1"/><path d="M1050.0 436 V466" stroke="#eaedf2" stroke-width="1"/><path d="M1097.4 436 V466" stroke="#eaedf2" stroke-width="1"/><polyline fill="none" stroke="#5fb4e6" stroke-width="0.9" stroke-linejoin="round" opacity="1" points="765.7,465.1 767.7,465.1 769.7,465.1 771.7,465.1 773.6,465.1 775.6,465.1 777.6,465.1 779.6,465.1 781.6,465.1 783.6,465.1 785.6,465.1 787.5,465.1 789.5,465.1 791.5,465.1 793.5,465.1 795.5,455.3 797.5,465.1 799.5,465.1 801.5,465.1 803.4,455.3 805.4,455.3 807.4,465.1 809.4,465.1 811.4,465.1 813.4,465.1 815.4,465.1 817.3,465.1 819.3,465.1 821.3,465.1 823.3,465.1 825.3,465.1 827.3,465.1 829.3,465.1 831.2,465.1 833.2,465.1 835.2,465.1 837.2,465.1 839.2,465.1 841.2,465.1 843.2,465.1 845.1,465.1 847.1,465.1 849.1,465.1 851.1,465.1 853.1,465.1 855.1,465.1 857.1,465.1 859.1,465.1 861.0,465.1 863.0,465.1 865.0,465.1 867.0,465.1 869.0,465.1 871.0,465.1 873.0,465.1 874.9,465.1 876.9,465.1 878.9,455.3 880.9,465.1 882.9,465.1 884.9,465.1 886.9,465.1 888.8,455.3 890.8,455.3 892.8,465.1 894.8,455.3 896.8,465.1 898.8,465.1 900.8,465.1 902.7,455.3 904.7,465.1 906.7,455.3 908.7,465.1 910.7,465.1 912.7,465.1 914.7,465.1 916.7,465.1 918.6,445.5 920.6,465.1 922.6,465.1 924.6,465.1 926.6,465.1 928.6,445.5 930.6,465.1 932.5,465.1 934.5,455.3 936.5,465.1 938.5,465.1 940.5,465.1 942.5,465.1 944.5,435.7 946.4,465.1 948.4,465.1 950.4,465.1 952.4,455.3 954.4,465.1 956.4,455.3 958.4,465.1 960.4,465.1 962.3,465.1 964.3,455.3 966.3,465.1 968.3,465.1 970.3,445.5 972.3,465.1 974.3,465.1 976.2,465.1 978.2,465.1 980.2,465.1 982.2,465.1 984.2,465.1 986.2,465.1 988.2,445.5 990.1,465.1 992.1,465.1 994.1,465.1 996.1,455.3 998.1,465.1 1000.1,465.1 1002.1,465.1 1004.0,465.1 1006.0,465.1 1008.0,465.1 1010.0,455.3 1012.0,465.1 1014.0,455.3 1016.0,465.1 1018.0,435.7 1019.9,465.1 1021.9,465.1 1023.9,465.1 1025.9,465.1 1027.9,455.3 1029.9,465.1 1031.9,465.1 1033.8,465.1 1035.8,465.1 1037.8,465.1 1039.8,465.1 1041.8,465.1 1043.8,455.3 1045.8,465.1 1047.7,465.1 1049.7,465.1 1051.7,465.1 1053.7,465.1 1055.7,465.1 1057.7,465.1 1059.7,455.3 1061.6,465.1 1063.6,465.1 1065.6,465.1 1067.6,465.1 1069.6,465.1 1071.6,465.1 1073.6,465.1 1075.6,455.3 1077.5,465.1 1079.5,445.5 1081.5,465.1 1083.5,465.1 1085.5,465.1 1087.5,465.1 1089.5,455.3 1091.4,465.1 1093.4,455.3 1095.4,465.1 1097.4,465.1"/><polygon fill="#4355c9" opacity=".07" points="765.7,465.1 765.7,465.1 767.7,455.3 769.7,465.1 771.7,465.1 773.6,465.1 775.6,465.1 777.6,455.3 779.6,465.1 781.6,465.1 783.6,465.1 785.6,455.3 787.5,465.1 789.5,465.1 791.5,465.1 793.5,465.1 795.5,465.1 797.5,465.1 799.5,465.1 801.5,465.1 803.4,465.1 805.4,465.1 807.4,465.1 809.4,465.1 811.4,465.1 813.4,465.1 815.4,465.1 817.3,465.1 819.3,465.1 821.3,465.1 823.3,465.1 825.3,465.1 827.3,465.1 829.3,465.1 831.2,455.3 833.2,465.1 835.2,465.1 837.2,465.1 839.2,465.1 841.2,465.1 843.2,465.1 845.1,465.1 847.1,465.1 849.1,465.1 851.1,465.1 853.1,455.3 855.1,465.1 857.1,455.3 859.1,465.1 861.0,465.1 863.0,465.1 865.0,465.1 867.0,455.3 869.0,465.1 871.0,455.3 873.0,465.1 874.9,465.1 876.9,455.3 878.9,465.1 880.9,455.3 882.9,465.1 884.9,455.3 886.9,465.1 888.8,465.1 890.8,465.1 892.8,465.1 894.8,465.1 896.8,465.1 898.8,465.1 900.8,465.1 902.7,465.1 904.7,465.1 906.7,465.1 908.7,455.3 910.7,465.1 912.7,465.1 914.7,465.1 916.7,465.1 918.6,455.3 920.6,455.3 922.6,445.5 924.6,465.1 926.6,465.1 928.6,455.3 930.6,465.1 932.5,465.1 934.5,465.1 936.5,465.1 938.5,455.3 940.5,455.3 942.5,465.1 944.5,455.3 946.4,465.1 948.4,455.3 950.4,465.1 952.4,465.1 954.4,465.1 956.4,465.1 958.4,465.1 960.4,465.1 962.3,465.1 964.3,465.1 966.3,465.1 968.3,455.3 970.3,455.3 972.3,465.1 974.3,465.1 976.2,465.1 978.2,445.5 980.2,465.1 982.2,465.1 984.2,445.5 986.2,465.1 988.2,465.1 990.1,455.3 992.1,465.1 994.1,465.1 996.1,465.1 998.1,465.1 1000.1,455.3 1002.1,465.1 1004.0,465.1 1006.0,465.1 1008.0,465.1 1010.0,465.1 1012.0,445.5 1014.0,465.1 1016.0,465.1 1018.0,455.3 1019.9,465.1 1021.9,455.3 1023.9,465.1 1025.9,455.3 1027.9,465.1 1029.9,465.1 1031.9,465.1 1033.8,455.3 1035.8,465.1 1037.8,455.3 1039.8,465.1 1041.8,455.3 1043.8,465.1 1045.8,465.1 1047.7,465.1 1049.7,465.1 1051.7,465.1 1053.7,465.1 1055.7,465.1 1057.7,465.1 1059.7,455.3 1061.6,445.5 1063.6,465.1 1065.6,465.1 1067.6,455.3 1069.6,465.1 1071.6,445.5 1073.6,465.1 1075.6,455.3 1077.5,465.1 1079.5,465.1 1081.5,465.1 1083.5,445.5 1085.5,465.1 1087.5,465.1 1089.5,465.1 1091.4,465.1 1093.4,465.1 1095.4,465.1 1097.4,465.1 1097.4,465.1"/><polyline fill="none" stroke="#4355c9" stroke-width="1" stroke-linejoin="round" opacity="1" points="765.7,465.1 767.7,455.3 769.7,465.1 771.7,465.1 773.6,465.1 775.6,465.1 777.6,455.3 779.6,465.1 781.6,465.1 783.6,465.1 785.6,455.3 787.5,465.1 789.5,465.1 791.5,465.1 793.5,465.1 795.5,465.1 797.5,465.1 799.5,465.1 801.5,465.1 803.4,465.1 805.4,465.1 807.4,465.1 809.4,465.1 811.4,465.1 813.4,465.1 815.4,465.1 817.3,465.1 819.3,465.1 821.3,465.1 823.3,465.1 825.3,465.1 827.3,465.1 829.3,465.1 831.2,455.3 833.2,465.1 835.2,465.1 837.2,465.1 839.2,465.1 841.2,465.1 843.2,465.1 845.1,465.1 847.1,465.1 849.1,465.1 851.1,465.1 853.1,455.3 855.1,465.1 857.1,455.3 859.1,465.1 861.0,465.1 863.0,465.1 865.0,465.1 867.0,455.3 869.0,465.1 871.0,455.3 873.0,465.1 874.9,465.1 876.9,455.3 878.9,465.1 880.9,455.3 882.9,465.1 884.9,455.3 886.9,465.1 888.8,465.1 890.8,465.1 892.8,465.1 894.8,465.1 896.8,465.1 898.8,465.1 900.8,465.1 902.7,465.1 904.7,465.1 906.7,465.1 908.7,455.3 910.7,465.1 912.7,465.1 914.7,465.1 916.7,465.1 918.6,455.3 920.6,455.3 922.6,445.5 924.6,465.1 926.6,465.1 928.6,455.3 930.6,465.1 932.5,465.1 934.5,465.1 936.5,465.1 938.5,455.3 940.5,455.3 942.5,465.1 944.5,455.3 946.4,465.1 948.4,455.3 950.4,465.1 952.4,465.1 954.4,465.1 956.4,465.1 958.4,465.1 960.4,465.1 962.3,465.1 964.3,465.1 966.3,465.1 968.3,455.3 970.3,455.3 972.3,465.1 974.3,465.1 976.2,465.1 978.2,445.5 980.2,465.1 982.2,465.1 984.2,445.5 986.2,465.1 988.2,465.1 990.1,455.3 992.1,465.1 994.1,465.1 996.1,465.1 998.1,465.1 1000.1,455.3 1002.1,465.1 1004.0,465.1 1006.0,465.1 1008.0,465.1 1010.0,465.1 1012.0,445.5 1014.0,465.1 1016.0,465.1 1018.0,455.3 1019.9,465.1 1021.9,455.3 1023.9,465.1 1025.9,455.3 1027.9,465.1 1029.9,465.1 1031.9,465.1 1033.8,455.3 1035.8,465.1 1037.8,455.3 1039.8,465.1 1041.8,455.3 1043.8,465.1 1045.8,465.1 1047.7,465.1 1049.7,465.1 1051.7,465.1 1053.7,465.1 1055.7,465.1 1057.7,465.1 1059.7,455.3 1061.6,445.5 1063.6,465.1 1065.6,465.1 1067.6,455.3 1069.6,465.1 1071.6,445.5 1073.6,465.1 1075.6,455.3 1077.5,465.1 1079.5,465.1 1081.5,465.1 1083.5,445.5 1085.5,465.1 1087.5,465.1 1089.5,465.1 1091.4,465.1 1093.4,465.1 1095.4,465.1 1097.4,465.1"/><path d="M765.7 489 V519" stroke="#eaedf2" stroke-width="1"/><path d="M813.1 489 V519" stroke="#eaedf2" stroke-width="1"/><path d="M860.5 489 V519" stroke="#eaedf2" stroke-width="1"/><path d="M907.9 489 V519" stroke="#eaedf2" stroke-width="1"/><path d="M955.2 489 V519" stroke="#eaedf2" stroke-width="1"/><path d="M1002.6 489 V519" stroke="#eaedf2" stroke-width="1"/><path d="M1050.0 489 V519" stroke="#eaedf2" stroke-width="1"/><path d="M1097.4 489 V519" stroke="#eaedf2" stroke-width="1"/><polyline fill="none" stroke="#5fb4e6" stroke-width="0.9" stroke-linejoin="round" opacity="1" points="765.7,518.4 767.7,518.4 769.7,518.4 771.7,518.4 773.6,518.4 775.6,518.4 777.6,518.4 779.6,518.4 781.6,518.4 783.6,518.4 785.6,518.4 787.5,506.6 789.5,506.6 791.5,518.4 793.5,518.4 795.5,512.5 797.5,518.4 799.5,518.4 801.5,518.4 803.4,518.4 805.4,518.4 807.4,518.4 809.4,518.4 811.4,518.4 813.4,518.4 815.4,518.4 817.3,518.4 819.3,518.4 821.3,518.4 823.3,518.4 825.3,518.4 827.3,518.4 829.3,518.4 831.2,518.4 833.2,518.4 835.2,512.5 837.2,518.4 839.2,518.4 841.2,506.6 843.2,518.4 845.1,506.6 847.1,518.4 849.1,506.6 851.1,518.4 853.1,518.4 855.1,518.4 857.1,512.5 859.1,518.4 861.0,518.4 863.0,518.4 865.0,518.4 867.0,518.4 869.0,518.4 871.0,518.4 873.0,506.6 874.9,518.4 876.9,518.4 878.9,518.4 880.9,518.4 882.9,500.7 884.9,518.4 886.9,518.4 888.8,506.6 890.8,518.4 892.8,518.4 894.8,518.4 896.8,518.4 898.8,518.4 900.8,518.4 902.7,506.6 904.7,518.4 906.7,518.4 908.7,518.4 910.7,512.5 912.7,518.4 914.7,518.4 916.7,518.4 918.6,518.4 920.6,518.4 922.6,512.5 924.6,518.4 926.6,512.5 928.6,518.4 930.6,518.4 932.5,518.4 934.5,500.7 936.5,518.4 938.5,518.4 940.5,518.4 942.5,512.5 944.5,512.5 946.4,518.4 948.4,518.4 950.4,518.4 952.4,518.4 954.4,518.4 956.4,518.4 958.4,518.4 960.4,518.4 962.3,512.5 964.3,518.4 966.3,518.4 968.3,506.6 970.3,518.4 972.3,518.4 974.3,518.4 976.2,506.6 978.2,518.4 980.2,518.4 982.2,518.4 984.2,500.7 986.2,518.4 988.2,518.4 990.1,518.4 992.1,518.4 994.1,518.4 996.1,512.5 998.1,518.4 1000.1,518.4 1002.1,518.4 1004.0,518.4 1006.0,518.4 1008.0,512.5 1010.0,512.5 1012.0,518.4 1014.0,518.4 1016.0,518.4 1018.0,518.4 1019.9,518.4 1021.9,518.4 1023.9,500.7 1025.9,518.4 1027.9,512.5 1029.9,518.4 1031.9,518.4 1033.8,518.4 1035.8,494.8 1037.8,499.5 1039.8,494.8 1041.8,518.4 1043.8,518.4 1045.8,518.4 1047.7,518.4 1049.7,518.4 1051.7,518.4 1053.7,518.4 1055.7,518.4 1057.7,512.5 1059.7,518.4 1061.6,518.4 1063.6,494.8 1065.6,518.4 1067.6,518.4 1069.6,518.4 1071.6,518.4 1073.6,506.6 1075.6,518.4 1077.5,518.4 1079.5,518.4 1081.5,518.4 1083.5,518.4 1085.5,506.6 1087.5,518.4 1089.5,518.4 1091.4,518.4 1093.4,518.4 1095.4,518.4 1097.4,518.4"/><polygon fill="#4355c9" opacity=".07" points="765.7,518.4 765.7,518.4 767.7,518.4 769.7,518.4 771.7,512.5 773.6,518.4 775.6,518.4 777.6,518.4 779.6,518.4 781.6,518.4 783.6,518.4 785.6,512.5 787.5,518.4 789.5,512.5 791.5,518.4 793.5,512.5 795.5,500.7 797.5,510.1 799.5,518.4 801.5,518.4 803.4,518.4 805.4,512.5 807.4,518.4 809.4,512.5 811.4,518.4 813.4,506.6 815.4,518.4 817.3,512.5 819.3,518.4 821.3,518.4 823.3,518.4 825.3,518.4 827.3,518.4 829.3,518.4 831.2,518.4 833.2,512.5 835.2,518.4 837.2,518.4 839.2,506.6 841.2,512.5 843.2,518.4 845.1,512.5 847.1,518.4 849.1,518.4 851.1,518.4 853.1,518.4 855.1,518.4 857.1,518.4 859.1,518.4 861.0,518.4 863.0,512.5 865.0,518.4 867.0,518.4 869.0,518.4 871.0,518.4 873.0,518.4 874.9,512.5 876.9,518.4 878.9,518.4 880.9,506.6 882.9,518.4 884.9,506.6 886.9,506.6 888.8,518.4 890.8,512.5 892.8,518.4 894.8,512.5 896.8,518.4 898.8,512.5 900.8,518.4 902.7,518.4 904.7,518.4 906.7,518.4 908.7,518.4 910.7,518.4 912.7,518.4 914.7,518.4 916.7,518.4 918.6,512.5 920.6,518.4 922.6,518.4 924.6,518.4 926.6,518.4 928.6,518.4 930.6,518.4 932.5,506.6 934.5,518.4 936.5,518.4 938.5,500.7 940.5,518.4 942.5,518.4 944.5,512.5 946.4,518.4 948.4,512.5 950.4,518.4 952.4,512.5 954.4,518.4 956.4,518.4 958.4,518.4 960.4,518.4 962.3,518.4 964.3,512.5 966.3,518.4 968.3,518.4 970.3,518.4 972.3,518.4 974.3,512.5 976.2,506.6 978.2,518.4 980.2,488.9 982.2,518.4 984.2,518.4 986.2,518.4 988.2,500.7 990.1,518.4 992.1,518.4 994.1,506.6 996.1,518.4 998.1,518.4 1000.1,518.4 1002.1,518.4 1004.0,518.4 1006.0,518.4 1008.0,518.4 1010.0,518.4 1012.0,518.4 1014.0,518.4 1016.0,512.5 1018.0,518.4 1019.9,506.6 1021.9,518.4 1023.9,518.4 1025.9,500.7 1027.9,518.4 1029.9,518.4 1031.9,506.6 1033.8,506.6 1035.8,518.4 1037.8,512.5 1039.8,512.5 1041.8,512.5 1043.8,512.5 1045.8,512.5 1047.7,518.4 1049.7,518.4 1051.7,518.4 1053.7,518.4 1055.7,518.4 1057.7,518.4 1059.7,518.4 1061.6,518.4 1063.6,506.6 1065.6,518.4 1067.6,518.4 1069.6,518.4 1071.6,512.5 1073.6,518.4 1075.6,518.4 1077.5,512.5 1079.5,512.5 1081.5,518.4 1083.5,518.4 1085.5,518.4 1087.5,518.4 1089.5,512.5 1091.4,518.4 1093.4,518.4 1095.4,518.4 1097.4,518.4 1097.4,518.4"/><polyline fill="none" stroke="#4355c9" stroke-width="1" stroke-linejoin="round" opacity="1" points="765.7,518.4 767.7,518.4 769.7,518.4 771.7,512.5 773.6,518.4 775.6,518.4 777.6,518.4 779.6,518.4 781.6,518.4 783.6,518.4 785.6,512.5 787.5,518.4 789.5,512.5 791.5,518.4 793.5,512.5 795.5,500.7 797.5,510.1 799.5,518.4 801.5,518.4 803.4,518.4 805.4,512.5 807.4,518.4 809.4,512.5 811.4,518.4 813.4,506.6 815.4,518.4 817.3,512.5 819.3,518.4 821.3,518.4 823.3,518.4 825.3,518.4 827.3,518.4 829.3,518.4 831.2,518.4 833.2,512.5 835.2,518.4 837.2,518.4 839.2,506.6 841.2,512.5 843.2,518.4 845.1,512.5 847.1,518.4 849.1,518.4 851.1,518.4 853.1,518.4 855.1,518.4 857.1,518.4 859.1,518.4 861.0,518.4 863.0,512.5 865.0,518.4 867.0,518.4 869.0,518.4 871.0,518.4 873.0,518.4 874.9,512.5 876.9,518.4 878.9,518.4 880.9,506.6 882.9,518.4 884.9,506.6 886.9,506.6 888.8,518.4 890.8,512.5 892.8,518.4 894.8,512.5 896.8,518.4 898.8,512.5 900.8,518.4 902.7,518.4 904.7,518.4 906.7,518.4 908.7,518.4 910.7,518.4 912.7,518.4 914.7,518.4 916.7,518.4 918.6,512.5 920.6,518.4 922.6,518.4 924.6,518.4 926.6,518.4 928.6,518.4 930.6,518.4 932.5,506.6 934.5,518.4 936.5,518.4 938.5,500.7 940.5,518.4 942.5,518.4 944.5,512.5 946.4,518.4 948.4,512.5 950.4,518.4 952.4,512.5 954.4,518.4 956.4,518.4 958.4,518.4 960.4,518.4 962.3,518.4 964.3,512.5 966.3,518.4 968.3,518.4 970.3,518.4 972.3,518.4 974.3,512.5 976.2,506.6 978.2,518.4 980.2,488.9 982.2,518.4 984.2,518.4 986.2,518.4 988.2,500.7 990.1,518.4 992.1,518.4 994.1,506.6 996.1,518.4 998.1,518.4 1000.1,518.4 1002.1,518.4 1004.0,518.4 1006.0,518.4 1008.0,518.4 1010.0,518.4 1012.0,518.4 1014.0,518.4 1016.0,512.5 1018.0,518.4 1019.9,506.6 1021.9,518.4 1023.9,518.4 1025.9,500.7 1027.9,518.4 1029.9,518.4 1031.9,506.6 1033.8,506.6 1035.8,518.4 1037.8,512.5 1039.8,512.5 1041.8,512.5 1043.8,512.5 1045.8,512.5 1047.7,518.4 1049.7,518.4 1051.7,518.4 1053.7,518.4 1055.7,518.4 1057.7,518.4 1059.7,518.4 1061.6,518.4 1063.6,506.6 1065.6,518.4 1067.6,518.4 1069.6,518.4 1071.6,512.5 1073.6,518.4 1075.6,518.4 1077.5,512.5 1079.5,512.5 1081.5,518.4 1083.5,518.4 1085.5,518.4 1087.5,518.4 1089.5,512.5 1091.4,518.4 1093.4,518.4 1095.4,518.4 1097.4,518.4"/><path d="M765.7 542.5 V572.5" stroke="#eaedf2" stroke-width="1"/><path d="M813.1 542.5 V572.5" stroke="#eaedf2" stroke-width="1"/><path d="M860.5 542.5 V572.5" stroke="#eaedf2" stroke-width="1"/><path d="M907.9 542.5 V572.5" stroke="#eaedf2" stroke-width="1"/><path d="M955.2 542.5 V572.5" stroke="#eaedf2" stroke-width="1"/><path d="M1002.6 542.5 V572.5" stroke="#eaedf2" stroke-width="1"/><path d="M1050.0 542.5 V572.5" stroke="#eaedf2" stroke-width="1"/><path d="M1097.4 542.5 V572.5" stroke="#eaedf2" stroke-width="1"/><polyline fill="none" stroke="#5fb4e6" stroke-width="0.9" stroke-linejoin="round" opacity="1" points="765.7,563.3 767.7,563.3 769.7,563.3 771.7,563.3 773.6,563.3 775.6,563.3 777.6,563.3 779.6,563.3 781.6,563.3 783.6,563.3 785.6,563.3 787.5,556.3 789.5,563.3 791.5,563.3 793.5,563.3 795.5,563.3 797.5,563.3 799.5,563.3 801.5,563.3 803.4,563.3 805.4,563.3 807.4,563.3 809.4,563.3 811.4,563.3 813.4,563.3 815.4,563.3 817.3,563.3 819.3,563.3 821.3,563.3 823.3,563.3 825.3,563.3 827.3,563.3 829.3,563.3 831.2,563.3 833.2,563.3 835.2,563.3 837.2,563.3 839.2,563.3 841.2,561.5 843.2,563.3 845.1,563.3 847.1,563.3 849.1,559.9 851.1,563.3 853.1,563.3 855.1,563.3 857.1,563.3 859.1,563.3 861.0,563.3 863.0,563.3 865.0,563.3 867.0,563.3 869.0,563.3 871.0,563.3 873.0,563.3 874.9,563.3 876.9,563.3 878.9,563.3 880.9,563.3 882.9,559.8 884.9,563.3 886.9,561.5 888.8,563.3 890.8,563.3 892.8,563.3 894.8,561.9 896.8,563.3 898.8,563.3 900.8,563.3 902.7,561.7 904.7,563.3 906.7,563.3 908.7,563.3 910.7,563.3 912.7,563.3 914.7,563.3 916.7,563.3 918.6,563.3 920.6,563.3 922.6,561.1 924.6,563.3 926.6,563.3 928.6,563.3 930.6,563.3 932.5,563.3 934.5,560.6 936.5,563.3 938.5,563.3 940.5,563.3 942.5,563.3 944.5,563.3 946.4,563.3 948.4,563.3 950.4,563.3 952.4,563.3 954.4,563.3 956.4,563.3 958.4,563.3 960.4,563.3 962.3,563.3 964.3,563.3 966.3,561.1 968.3,563.3 970.3,563.3 972.3,563.3 974.3,563.3 976.2,563.3 978.2,563.3 980.2,563.3 982.2,563.3 984.2,563.3 986.2,563.3 988.2,563.3 990.1,563.3 992.1,563.3 994.1,563.3 996.1,561.9 998.1,563.3 1000.1,563.3 1002.1,563.3 1004.0,563.3 1006.0,563.3 1008.0,563.3 1010.0,563.3 1012.0,563.3 1014.0,563.3 1016.0,563.3 1018.0,563.3 1019.9,563.3 1021.9,563.3 1023.9,561.9 1025.9,563.3 1027.9,563.3 1029.9,563.3 1031.9,563.3 1033.8,563.3 1035.8,561.3 1037.8,563.3 1039.8,560.2 1041.8,563.3 1043.8,563.3 1045.8,563.3 1047.7,563.3 1049.7,563.3 1051.7,563.3 1053.7,563.3 1055.7,563.3 1057.7,563.3 1059.7,563.3 1061.6,563.3 1063.6,563.3 1065.6,561.2 1067.6,563.3 1069.6,563.3 1071.6,563.3 1073.6,563.3 1075.6,561.2 1077.5,563.3 1079.5,563.3 1081.5,563.3 1083.5,563.3 1085.5,561.5 1087.5,563.3 1089.5,563.3 1091.4,563.3 1093.4,563.3 1095.4,563.3 1097.4,563.3"/><polygon fill="#4355c9" opacity=".07" points="765.7,563.3 765.7,563.3 767.7,563.3 769.7,563.3 771.7,562.6 773.6,563.3 775.6,563.3 777.6,563.3 779.6,563.3 781.6,563.3 783.6,563.3 785.6,563.3 787.5,563.3 789.5,563.3 791.5,563.3 793.5,563.3 795.5,562.2 797.5,563.3 799.5,563.3 801.5,563.3 803.4,563.3 805.4,562.6 807.4,563.3 809.4,563.3 811.4,563.3 813.4,562.6 815.4,563.3 817.3,563.3 819.3,563.3 821.3,563.3 823.3,563.3 825.3,563.3 827.3,563.3 829.3,563.3 831.2,563.3 833.2,563.3 835.2,563.3 837.2,562.2 839.2,563.3 841.2,563.3 843.2,563.3 845.1,563.3 847.1,562.4 849.1,563.3 851.1,563.3 853.1,563.3 855.1,563.3 857.1,563.3 859.1,563.3 861.0,563.3 863.0,563.3 865.0,563.3 867.0,563.3 869.0,563.3 871.0,563.3 873.0,563.3 874.9,561.3 876.9,563.3 878.9,563.3 880.9,560.2 882.9,563.3 884.9,563.3 886.9,542.3 888.8,563.3 890.8,563.3 892.8,563.3 894.8,561.3 896.8,563.3 898.8,562.6 900.8,563.3 902.7,563.3 904.7,563.3 906.7,563.3 908.7,563.3 910.7,563.3 912.7,563.3 914.7,563.3 916.7,563.3 918.6,563.3 920.6,563.3 922.6,563.3 924.6,563.3 926.6,563.3 928.6,563.3 930.6,563.3 932.5,561.3 934.5,563.3 936.5,563.3 938.5,558.0 940.5,563.3 942.5,564.3 944.5,563.3 946.4,563.3 948.4,563.3 950.4,563.3 952.4,560.8 954.4,563.3 956.4,563.3 958.4,563.3 960.4,563.3 962.3,563.3 964.3,563.3 966.3,563.3 968.3,563.3 970.3,563.3 972.3,561.9 974.3,563.3 976.2,557.5 978.2,571.9 980.2,555.7 982.2,563.3 984.2,563.3 986.2,563.3 988.2,560.6 990.1,563.3 992.1,563.3 994.1,562.2 996.1,563.3 998.1,563.3 1000.1,563.3 1002.1,563.3 1004.0,563.3 1006.0,563.3 1008.0,563.3 1010.0,563.3 1012.0,563.3 1014.0,563.3 1016.0,562.2 1018.0,563.3 1019.9,561.3 1021.9,563.3 1023.9,563.3 1025.9,562.2 1027.9,563.3 1029.9,562.2 1031.9,563.3 1033.8,562.2 1035.8,563.3 1037.8,562.2 1039.8,563.3 1041.8,563.3 1043.8,563.3 1045.8,563.3 1047.7,563.3 1049.7,563.3 1051.7,563.3 1053.7,563.3 1055.7,563.3 1057.7,563.3 1059.7,563.3 1061.6,563.3 1063.6,560.8 1065.6,563.3 1067.6,563.3 1069.6,563.3 1071.6,557.2 1073.6,564.9 1075.6,563.3 1077.5,561.9 1079.5,563.3 1081.5,563.3 1083.5,563.3 1085.5,563.3 1087.5,563.3 1089.5,563.3 1091.4,563.3 1093.4,563.3 1095.4,563.3 1097.4,563.3 1097.4,563.3"/><polyline fill="none" stroke="#4355c9" stroke-width="1" stroke-linejoin="round" opacity="1" points="765.7,563.3 767.7,563.3 769.7,563.3 771.7,562.6 773.6,563.3 775.6,563.3 777.6,563.3 779.6,563.3 781.6,563.3 783.6,563.3 785.6,563.3 787.5,563.3 789.5,563.3 791.5,563.3 793.5,563.3 795.5,562.2 797.5,563.3 799.5,563.3 801.5,563.3 803.4,563.3 805.4,562.6 807.4,563.3 809.4,563.3 811.4,563.3 813.4,562.6 815.4,563.3 817.3,563.3 819.3,563.3 821.3,563.3 823.3,563.3 825.3,563.3 827.3,563.3 829.3,563.3 831.2,563.3 833.2,563.3 835.2,563.3 837.2,562.2 839.2,563.3 841.2,563.3 843.2,563.3 845.1,563.3 847.1,562.4 849.1,563.3 851.1,563.3 853.1,563.3 855.1,563.3 857.1,563.3 859.1,563.3 861.0,563.3 863.0,563.3 865.0,563.3 867.0,563.3 869.0,563.3 871.0,563.3 873.0,563.3 874.9,561.3 876.9,563.3 878.9,563.3 880.9,560.2 882.9,563.3 884.9,563.3 886.9,542.3 888.8,563.3 890.8,563.3 892.8,563.3 894.8,561.3 896.8,563.3 898.8,562.6 900.8,563.3 902.7,563.3 904.7,563.3 906.7,563.3 908.7,563.3 910.7,563.3 912.7,563.3 914.7,563.3 916.7,563.3 918.6,563.3 920.6,563.3 922.6,563.3 924.6,563.3 926.6,563.3 928.6,563.3 930.6,563.3 932.5,561.3 934.5,563.3 936.5,563.3 938.5,558.0 940.5,563.3 942.5,564.3 944.5,563.3 946.4,563.3 948.4,563.3 950.4,563.3 952.4,560.8 954.4,563.3 956.4,563.3 958.4,563.3 960.4,563.3 962.3,563.3 964.3,563.3 966.3,563.3 968.3,563.3 970.3,563.3 972.3,561.9 974.3,563.3 976.2,557.5 978.2,571.9 980.2,555.7 982.2,563.3 984.2,563.3 986.2,563.3 988.2,560.6 990.1,563.3 992.1,563.3 994.1,562.2 996.1,563.3 998.1,563.3 1000.1,563.3 1002.1,563.3 1004.0,563.3 1006.0,563.3 1008.0,563.3 1010.0,563.3 1012.0,563.3 1014.0,563.3 1016.0,562.2 1018.0,563.3 1019.9,561.3 1021.9,563.3 1023.9,563.3 1025.9,562.2 1027.9,563.3 1029.9,562.2 1031.9,563.3 1033.8,562.2 1035.8,563.3 1037.8,562.2 1039.8,563.3 1041.8,563.3 1043.8,563.3 1045.8,563.3 1047.7,563.3 1049.7,563.3 1051.7,563.3 1053.7,563.3 1055.7,563.3 1057.7,563.3 1059.7,563.3 1061.6,563.3 1063.6,560.8 1065.6,563.3 1067.6,563.3 1069.6,563.3 1071.6,557.2 1073.6,564.9 1075.6,563.3 1077.5,561.9 1079.5,563.3 1081.5,563.3 1083.5,563.3 1085.5,563.3 1087.5,563.3 1089.5,563.3 1091.4,563.3 1093.4,563.3 1095.4,563.3 1097.4,563.3"/><path d="M765.7 596 V626.5" stroke="#eaedf2" stroke-width="1"/><path d="M813.1 596 V626.5" stroke="#eaedf2" stroke-width="1"/><path d="M860.5 596 V626.5" stroke="#eaedf2" stroke-width="1"/><path d="M907.9 596 V626.5" stroke="#eaedf2" stroke-width="1"/><path d="M955.2 596 V626.5" stroke="#eaedf2" stroke-width="1"/><path d="M1002.6 596 V626.5" stroke="#eaedf2" stroke-width="1"/><path d="M1050.0 596 V626.5" stroke="#eaedf2" stroke-width="1"/><path d="M1097.4 596 V626.5" stroke="#eaedf2" stroke-width="1"/><polyline fill="none" stroke="#5fb4e6" stroke-width="0.9" stroke-linejoin="round" opacity="1" points="765.7,626.3 767.7,626.3 769.7,626.3 771.7,626.3 773.6,626.3 775.6,626.3 777.6,626.3 779.6,626.3 781.6,626.3 783.6,626.3 785.6,626.3 787.5,616.3 789.5,626.3 791.5,626.3 793.5,626.3 795.5,621.9 797.5,626.3 799.5,626.3 801.5,626.3 803.4,626.3 805.4,626.3 807.4,626.3 809.4,626.3 811.4,626.3 813.4,626.3 815.4,626.3 817.3,626.3 819.3,626.3 821.3,626.3 823.3,626.3 825.3,626.3 827.3,626.3 829.3,626.3 831.2,626.3 833.2,626.3 835.2,626.3 837.2,626.3 839.2,626.3 841.2,623.8 843.2,626.3 845.1,626.3 847.1,626.3 849.1,621.3 851.1,626.3 853.1,626.3 855.1,626.3 857.1,626.3 859.1,626.3 861.0,626.3 863.0,625.3 865.0,626.3 867.0,626.3 869.0,626.3 871.0,626.3 873.0,626.3 874.9,626.3 876.9,626.3 878.9,626.3 880.9,626.3 882.9,622.8 884.9,626.3 886.9,620.3 888.8,626.3 890.8,626.3 892.8,626.3 894.8,623.3 896.8,626.3 898.8,626.3 900.8,626.3 902.7,624.3 904.7,626.3 906.7,626.3 908.7,626.3 910.7,625.0 912.7,626.3 914.7,626.3 916.7,626.3 918.6,626.3 920.6,626.3 922.6,619.3 924.6,626.3 926.6,626.3 928.6,626.3 930.6,626.3 932.5,626.3 934.5,622.8 936.5,626.3 938.5,626.3 940.5,626.3 942.5,626.3 944.5,626.3 946.4,626.3 948.4,626.3 950.4,626.3 952.4,626.3 954.4,626.3 956.4,626.3 958.4,626.3 960.4,626.3 962.3,626.3 964.3,626.3 966.3,622.8 968.3,626.3 970.3,626.3 972.3,626.3 974.3,626.3 976.2,626.3 978.2,626.3 980.2,626.3 982.2,626.3 984.2,626.3 986.2,626.3 988.2,626.3 990.1,626.3 992.1,626.3 994.1,626.3 996.1,621.8 998.1,626.3 1000.1,626.3 1002.1,626.3 1004.0,626.3 1006.0,626.3 1008.0,626.3 1010.0,624.3 1012.0,626.3 1014.0,626.3 1016.0,626.3 1018.0,626.3 1019.9,626.3 1021.9,626.3 1023.9,626.3 1025.9,626.3 1027.9,626.3 1029.9,626.3 1031.9,626.3 1033.8,626.3 1035.8,626.3 1037.8,626.3 1039.8,623.3 1041.8,626.3 1043.8,626.3 1045.8,626.3 1047.7,626.3 1049.7,626.3 1051.7,626.3 1053.7,626.3 1055.7,626.3 1057.7,626.3 1059.7,626.3 1061.6,626.3 1063.6,626.3 1065.6,619.8 1067.6,626.3 1069.6,626.3 1071.6,626.3 1073.6,626.3 1075.6,619.3 1077.5,626.3 1079.5,626.3 1081.5,626.3 1083.5,626.3 1085.5,623.3 1087.5,626.3 1089.5,626.3 1091.4,626.3 1093.4,626.3 1095.4,626.3 1097.4,626.3"/><polygon fill="#4355c9" opacity=".07" points="765.7,626.3 765.7,626.3 767.7,626.3 769.7,626.3 771.7,623.8 773.6,626.3 775.6,626.3 777.6,626.3 779.6,626.3 781.6,626.3 783.6,626.3 785.6,625.3 787.5,626.3 789.5,625.0 791.5,626.3 793.5,626.3 795.5,625.3 797.5,626.3 799.5,626.3 801.5,626.3 803.4,626.3 805.4,624.0 807.4,626.3 809.4,626.3 811.4,626.3 813.4,625.3 815.4,626.3 817.3,626.3 819.3,626.3 821.3,626.3 823.3,626.3 825.3,626.3 827.3,626.3 829.3,626.3 831.2,626.3 833.2,626.3 835.2,626.3 837.2,622.5 839.2,626.3 841.2,624.8 843.2,626.3 845.1,626.3 847.1,624.1 849.1,626.3 851.1,626.3 853.1,626.3 855.1,626.3 857.1,626.3 859.1,626.3 861.0,626.3 863.0,626.3 865.0,626.3 867.0,626.3 869.0,626.3 871.0,626.3 873.0,626.3 874.9,620.3 876.9,626.3 878.9,626.3 880.9,621.8 882.9,626.3 884.9,626.3 886.9,596.0 888.8,624.3 890.8,626.3 892.8,626.3 894.8,620.3 896.8,626.3 898.8,624.8 900.8,626.3 902.7,626.3 904.7,626.3 906.7,626.3 908.7,626.3 910.7,626.3 912.7,626.3 914.7,626.3 916.7,626.3 918.6,625.3 920.6,626.3 922.6,626.3 924.6,626.3 926.6,626.3 928.6,626.3 930.6,626.3 932.5,623.3 934.5,626.3 936.5,626.3 938.5,620.8 940.5,626.3 942.5,626.3 944.5,626.3 946.4,626.3 948.4,626.3 950.4,624.3 952.4,618.3 954.4,626.3 956.4,626.3 958.4,626.3 960.4,626.3 962.3,626.3 964.3,626.3 966.3,626.3 968.3,626.3 970.3,626.3 972.3,622.3 974.3,626.3 976.2,617.8 978.2,626.3 980.2,615.3 982.2,626.3 984.2,626.3 986.2,626.3 988.2,622.3 990.1,626.3 992.1,626.3 994.1,624.8 996.1,626.3 998.1,626.3 1000.1,626.3 1002.1,626.3 1004.0,626.3 1006.0,626.3 1008.0,626.3 1010.0,626.3 1012.0,626.3 1014.0,626.3 1016.0,623.3 1018.0,626.3 1019.9,623.8 1021.9,626.3 1023.9,626.3 1025.9,626.3 1027.9,624.8 1029.9,624.3 1031.9,626.3 1033.8,624.7 1035.8,626.3 1037.8,624.8 1039.8,626.3 1041.8,625.1 1043.8,626.3 1045.8,626.3 1047.7,626.3 1049.7,626.3 1051.7,626.3 1053.7,626.3 1055.7,626.3 1057.7,626.3 1059.7,626.3 1061.6,626.3 1063.6,622.8 1065.6,626.3 1067.6,626.3 1069.6,626.3 1071.6,611.3 1073.6,626.3 1075.6,626.3 1077.5,622.3 1079.5,626.3 1081.5,626.3 1083.5,626.3 1085.5,626.3 1087.5,626.3 1089.5,626.3 1091.4,626.3 1093.4,626.3 1095.4,626.3 1097.4,626.3 1097.4,626.3"/><polyline fill="none" stroke="#4355c9" stroke-width="1" stroke-linejoin="round" opacity="1" points="765.7,626.3 767.7,626.3 769.7,626.3 771.7,623.8 773.6,626.3 775.6,626.3 777.6,626.3 779.6,626.3 781.6,626.3 783.6,626.3 785.6,625.3 787.5,626.3 789.5,625.0 791.5,626.3 793.5,626.3 795.5,625.3 797.5,626.3 799.5,626.3 801.5,626.3 803.4,626.3 805.4,624.0 807.4,626.3 809.4,626.3 811.4,626.3 813.4,625.3 815.4,626.3 817.3,626.3 819.3,626.3 821.3,626.3 823.3,626.3 825.3,626.3 827.3,626.3 829.3,626.3 831.2,626.3 833.2,626.3 835.2,626.3 837.2,622.5 839.2,626.3 841.2,624.8 843.2,626.3 845.1,626.3 847.1,624.1 849.1,626.3 851.1,626.3 853.1,626.3 855.1,626.3 857.1,626.3 859.1,626.3 861.0,626.3 863.0,626.3 865.0,626.3 867.0,626.3 869.0,626.3 871.0,626.3 873.0,626.3 874.9,620.3 876.9,626.3 878.9,626.3 880.9,621.8 882.9,626.3 884.9,626.3 886.9,596.0 888.8,624.3 890.8,626.3 892.8,626.3 894.8,620.3 896.8,626.3 898.8,624.8 900.8,626.3 902.7,626.3 904.7,626.3 906.7,626.3 908.7,626.3 910.7,626.3 912.7,626.3 914.7,626.3 916.7,626.3 918.6,625.3 920.6,626.3 922.6,626.3 924.6,626.3 926.6,626.3 928.6,626.3 930.6,626.3 932.5,623.3 934.5,626.3 936.5,626.3 938.5,620.8 940.5,626.3 942.5,626.3 944.5,626.3 946.4,626.3 948.4,626.3 950.4,624.3 952.4,618.3 954.4,626.3 956.4,626.3 958.4,626.3 960.4,626.3 962.3,626.3 964.3,626.3 966.3,626.3 968.3,626.3 970.3,626.3 972.3,622.3 974.3,626.3 976.2,617.8 978.2,626.3 980.2,615.3 982.2,626.3 984.2,626.3 986.2,626.3 988.2,622.3 990.1,626.3 992.1,626.3 994.1,624.8 996.1,626.3 998.1,626.3 1000.1,626.3 1002.1,626.3 1004.0,626.3 1006.0,626.3 1008.0,626.3 1010.0,626.3 1012.0,626.3 1014.0,626.3 1016.0,623.3 1018.0,626.3 1019.9,623.8 1021.9,626.3 1023.9,626.3 1025.9,626.3 1027.9,624.8 1029.9,624.3 1031.9,626.3 1033.8,624.7 1035.8,626.3 1037.8,624.8 1039.8,626.3 1041.8,625.1 1043.8,626.3 1045.8,626.3 1047.7,626.3 1049.7,626.3 1051.7,626.3 1053.7,626.3 1055.7,626.3 1057.7,626.3 1059.7,626.3 1061.6,626.3 1063.6,622.8 1065.6,626.3 1067.6,626.3 1069.6,626.3 1071.6,611.3 1073.6,626.3 1075.6,626.3 1077.5,622.3 1079.5,626.3 1081.5,626.3 1083.5,626.3 1085.5,626.3 1087.5,626.3 1089.5,626.3 1091.4,626.3 1093.4,626.3 1095.4,626.3 1097.4,626.3"/></svg>
</div></body></html>
